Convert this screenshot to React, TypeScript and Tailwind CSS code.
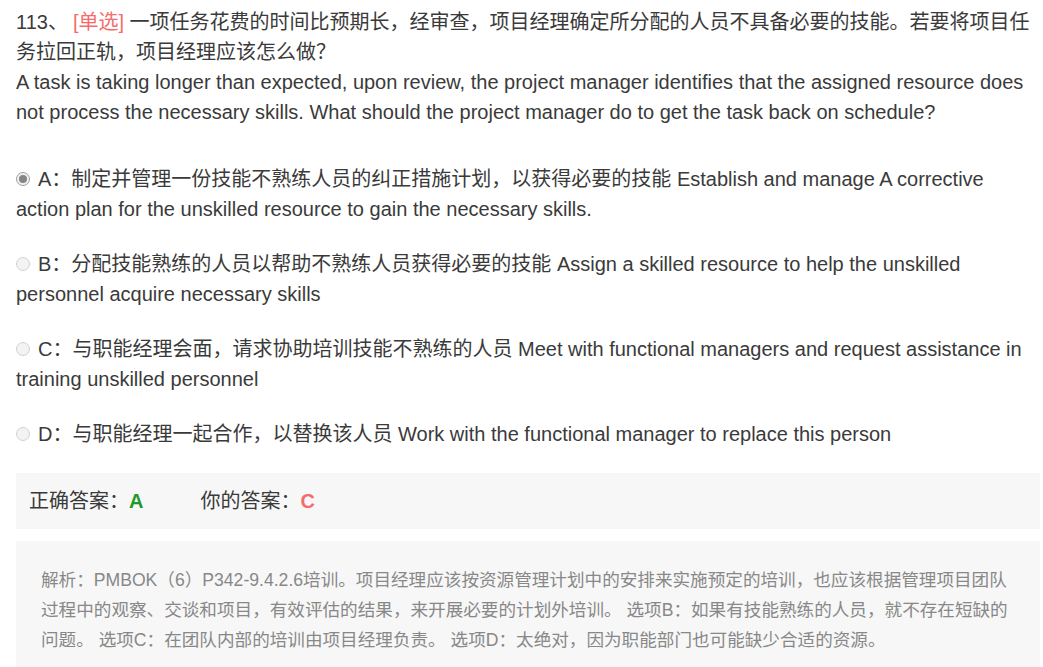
const options = [
  {
    key: "A",
    text: "制定并管理一份技能不熟练人员的纠正措施计划，以获得必要的技能 Establish and manage A corrective action plan for the unskilled resource to gain the necessary skills.",
    checked: true,
  },
  {
    key: "B",
    text: "分配技能熟练的人员以帮助不熟练人员获得必要的技能 Assign a skilled resource to help the unskilled personnel acquire necessary skills",
  },
  {
    key: "C",
    text: "与职能经理会面，请求协助培训技能不熟练的人员 Meet with functional managers and request assistance in training unskilled personnel",
  },
  {
    key: "D",
    text: "与职能经理一起合作，以替换该人员 Work with the functional manager to replace this person",
  },
];

function Radio({ checked }: { checked?: boolean }) {
  return (
    <span
      className={`mr-[8px] inline-flex h-[14px] w-[14px] translate-y-[-2px] items-center justify-center rounded-full border align-middle ${
        checked ? "border-[#a0a0a0] bg-[#f0f0f0]" : "border-[#d2d2d2] bg-[#f3f3f3]"
      }`}
    >
      {checked && <span className="h-[8px] w-[8px] rounded-full bg-[#858585]" />}
    </span>
  );
}

export default function App() {
  return (
    <div
      className="min-h-screen bg-white pt-[7px] pl-4 pr-[3px] text-[20px] leading-[30px] text-[#3a3a3a]"
      style={{ fontFamily: '"Liberation Sans", "Noto Sans CJK SC", sans-serif' }}
    >
      <div className="pr-[6px]">
        <span>113、</span>
        <span className="ml-[5px] text-[#f56c6c]">[单选]</span> 一项任务花费的时间比预期长，经审查，项目经理确定所分配的人员不具备必要的技能。若要将项目任务拉回正轨，项目经理应该怎么做？
        <br />
        A task is taking longer than expected, upon review, the project manager identifies that the assigned resource does not process the necessary skills. What should the project manager do to get the task back on schedule?
      </div>

      <div className="mt-[37px] flex flex-col gap-[25px] pr-[6px]">
        {options.map((o) => (
          <div key={o.key}>
            <Radio checked={o.checked} />
            {o.key}：{o.text}
          </div>
        ))}
      </div>

      <div className="mt-[24px] flex h-[56px] items-center bg-[#f7f7f7] px-[13px]">
        <span>正确答案：</span>
        <span className="font-bold text-[#1e9a28]">A</span>
        <span className="ml-[57px]">你的答案：</span>
        <span className="font-bold text-[#f56c6c]">C</span>
      </div>

      <div className="mt-[12px] bg-[#f7f7f7] px-[25px] pt-[24px] pb-6 text-[17.6px] leading-[30px] text-[#888]">
        解析：PMBOK（6）P342-9.4.2.6培训。项目经理应该按资源管理计划中的安排来实施预定的培训，也应该根据管理项目团队过程中的观察、交谈和项目，有效评估的结果，来开展必要的计划外培训。 选项B：如果有技能熟练的人员，就不存在短缺的问题。 选项C：在团队内部的培训由项目经理负责。 选项D：太绝对，因为职能部门也可能缺少合适的资源。
      </div>
    </div>
  );
}
